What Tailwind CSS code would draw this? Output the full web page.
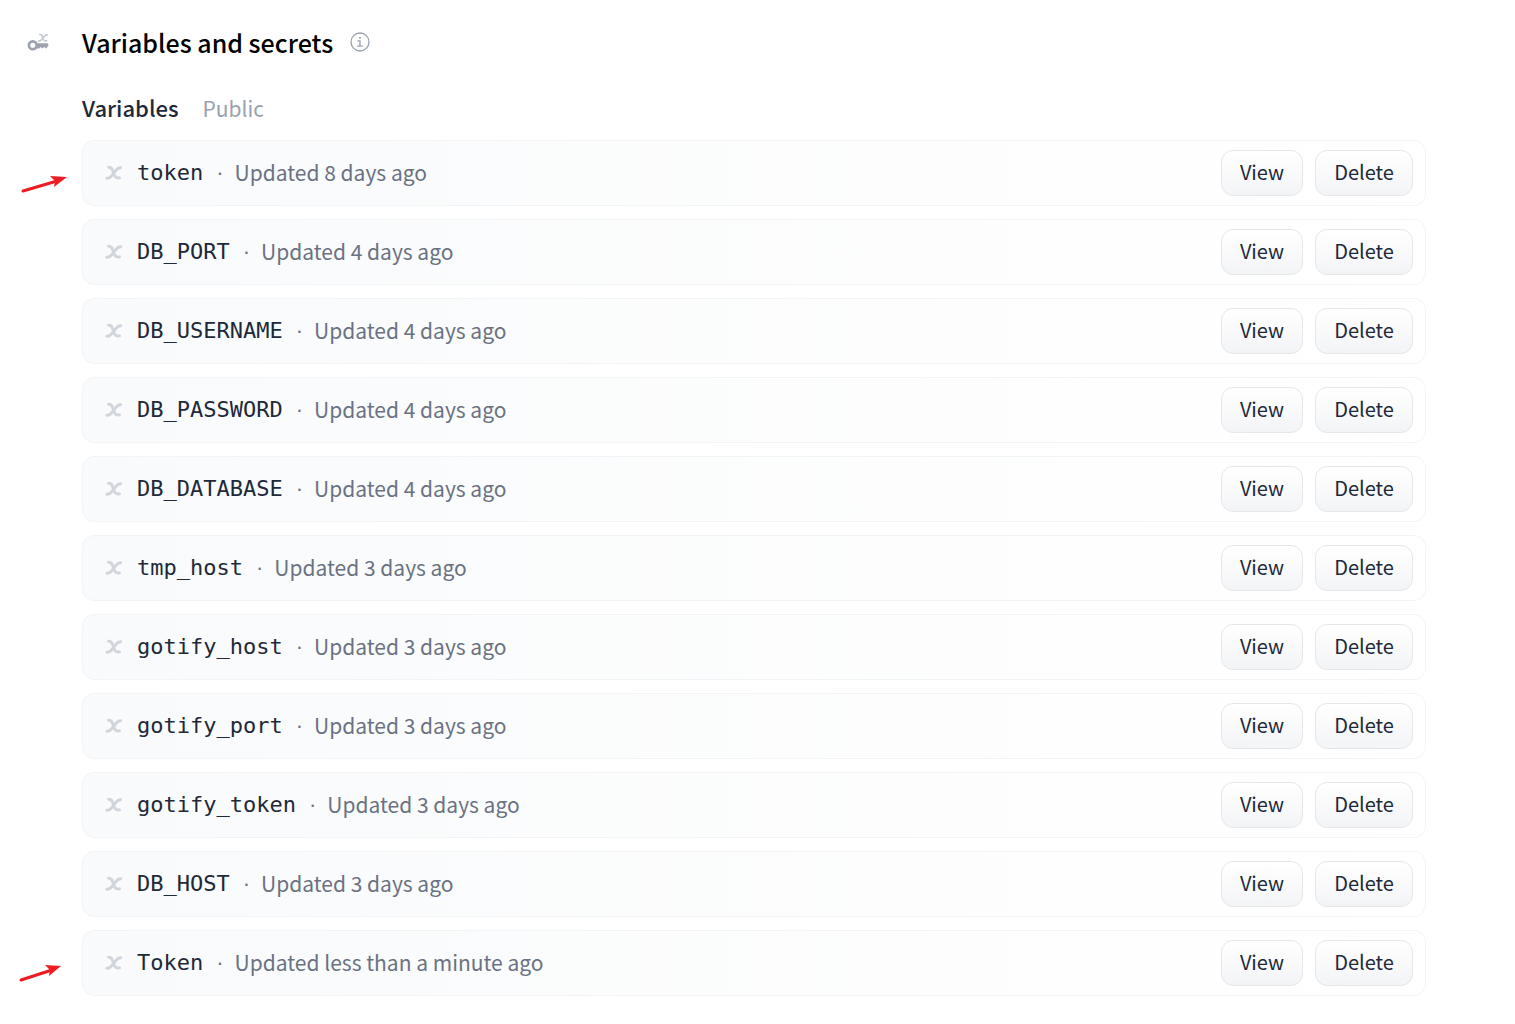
<!DOCTYPE html>
<html lang="en">
<head>
<meta charset="utf-8">
<meta name="viewport" content="width=device-width, initial-scale=1">
<title>Variables and secrets</title>
<script src="https://cdn.jsdelivr.net/npm/@tailwindcss/browser@4"></script>
</head>
<body class="bg-white font-['Noto_Sans_CJK_SC','Open_Sans',sans-serif] text-gray-800">
<svg class="hidden" aria-hidden="true">
  <symbol id="var-x" viewBox="0 0 18 16">
    <path d="M3.500 2.200Q6.300 2 7.300 4.800L9.600 10.800Q10.800 13.600 14.500 12.800M15.700 2.800Q13 2.800 10.800 5.600L6.500 11Q4.500 13.500 1.900 13.300" fill="none" stroke="currentColor" stroke-width="2.900" stroke-linecap="round"/>
  </symbol>
</svg>
<main class="flex pt-5 pr-[89px] pl-[27px]">
  <svg class="mt-[13px] mr-[33px] h-5 w-[22px] shrink-0" viewBox="0 0 22 20" fill="none" aria-hidden="true">
    <path d="M12.800 1.500Q14.600 1.300 15.300 3.200L16.500 6.500Q17.300 8.300 19.600 7.700M20.300 1.800Q18.600 1.700 17.300 3.400L14.600 6.700Q13.300 8.300 11.600 8" stroke="#c3c8d1" stroke-width="1.700" stroke-linecap="round"/>
    <circle cx="5.800" cy="12.300" r="3.900" stroke="#9ca3af" stroke-width="2.700"/>
    <path d="M9.500 10.300h11l1.200 1.800-2.400 3.500-2-1.600-2 1.600-1.600-1.600-1.600 1.600H10z" fill="#9ca3af"/>
  </svg>
  <section class="min-w-0 flex-1">
    <header class="flex items-center gap-[17px]">
      <h1 class="text-[25px] leading-[44px] font-medium text-black">Variables and secrets</h1>
      <svg class="size-5 text-gray-400" viewBox="0 0 20 20" fill="none" stroke="currentColor" stroke-width="1.300" aria-hidden="true">
        <circle cx="10" cy="10" r="9"/><path d="M7.500 8.800H10v5M7.200 14.200h5.600"/><path d="M10 5v1.800" stroke-width="1.800"/>
      </svg>
    </header>
    <div class="mt-[22px] flex items-baseline gap-6 leading-[42px]">
      <h2 class="text-[22px] font-medium">Variables</h2><span class="text-[21px] text-gray-400">Public</span>
    </div>
    <ul id="variables" class="mt-[11px] flex flex-col gap-[13px]"></ul>
  </section>
</main>
<svg class="absolute top-[174px] left-5 h-5 w-12" viewBox="0 0 48 20" aria-hidden="true"><path d="M3 17 37 7" stroke="#ed1c24" stroke-width="3" stroke-linecap="round"/><path d="M47 3 30 2l5 5-1 6z" fill="#ed1c24"/></svg>
<svg class="absolute top-[963px] left-[18px] h-5 w-11" viewBox="0 0 44 20" aria-hidden="true"><path d="M3 17 34 7" stroke="#ed1c24" stroke-width="3" stroke-linecap="round"/><path d="M43 3 27 2l5 5-1 6z" fill="#ed1c24"/></svg>
<template id="row">
  <li class="flex h-[66px] items-center rounded-xl border border-gray-100 bg-linear-to-r from-gray-50 to-white pr-3 pl-[22px]">
    <svg class="h-4 w-[18px] shrink-0 text-gray-300" aria-hidden="true"><use href="#var-x"/></svg>
    <code class="ml-[14px] font-['DejaVu_Sans_Mono',monospace] text-[22px] leading-8"></code>
    <span class="mr-[11px] ml-[13px] font-['Liberation_Sans',sans-serif] text-[22px] leading-8 text-gray-500">·</span>
    <span data-updated class="pb-0.5 text-[21px] leading-8 text-gray-500"></span>
    <div class="ml-auto flex gap-3 text-[20px] leading-8">
      <button type="button" class="h-[46px] w-[82px] rounded-xl border border-gray-200 bg-linear-to-b from-white to-gray-100 pb-0.5">View</button>
      <button type="button" class="h-[46px] w-[98px] rounded-xl border border-gray-200 bg-linear-to-b from-white to-gray-100 pb-0.5">Delete</button>
    </div>
  </li>
</template>
<script>
const variables = [
  ['token', '8 days ago'], ['DB_PORT', '4 days ago'], ['DB_USERNAME', '4 days ago'],
  ['DB_PASSWORD', '4 days ago'], ['DB_DATABASE', '4 days ago'], ['tmp_host', '3 days ago'],
  ['gotify_host', '3 days ago'], ['gotify_port', '3 days ago'], ['gotify_token', '3 days ago'],
  ['DB_HOST', '3 days ago'], ['Token', 'less than a minute ago'],
];
const list = document.getElementById('variables');
for (const [name, updated] of variables) {
  const row = document.getElementById('row').content.cloneNode(true);
  row.querySelector('code').textContent = name;
  row.querySelector('[data-updated]').textContent = 'Updated ' + updated;
  list.append(row);
}
</script>
</body>
</html>
